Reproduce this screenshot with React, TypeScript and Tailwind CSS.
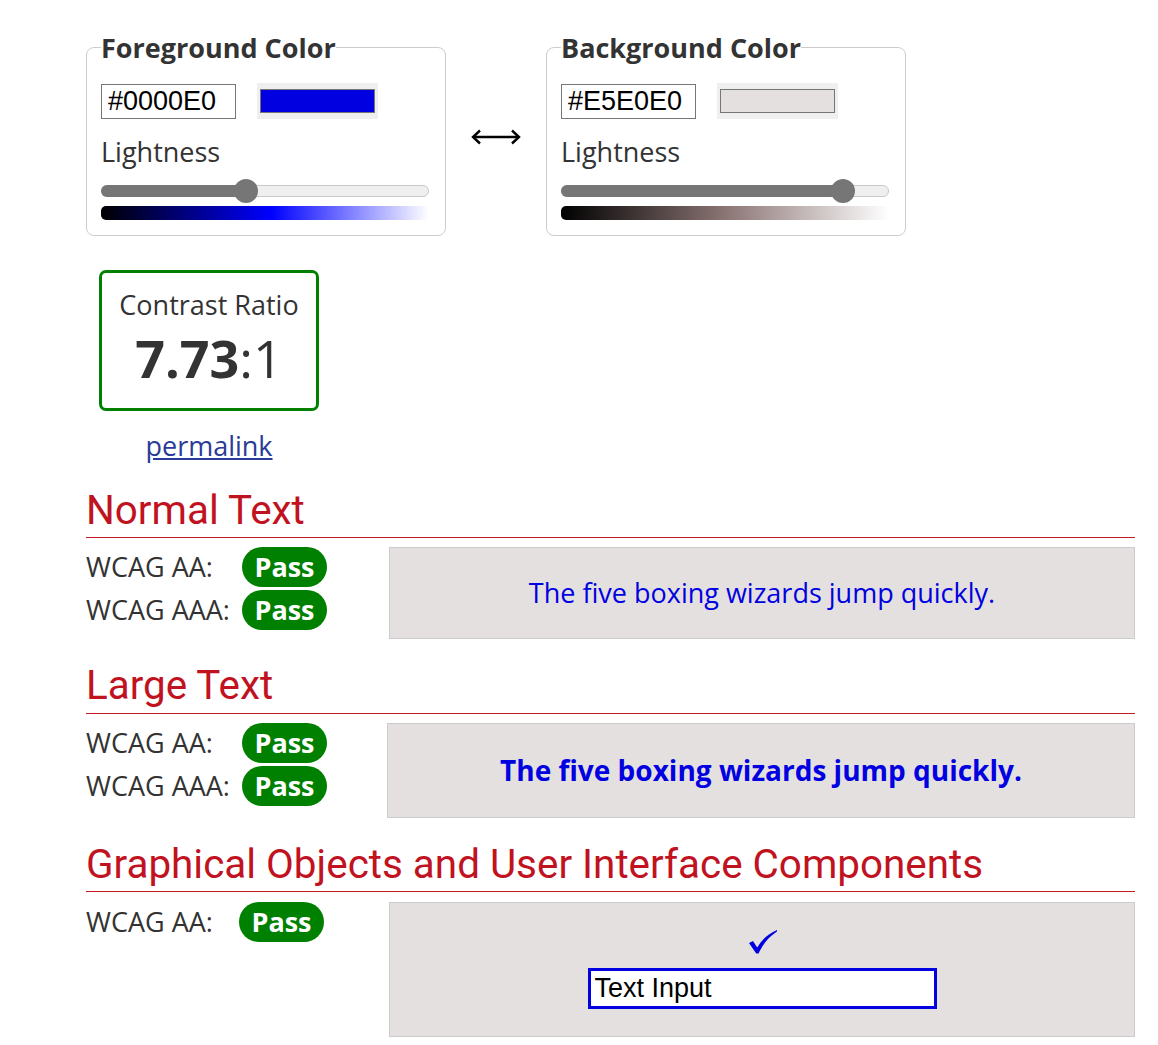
import React from 'react';

const FG = '#0000E0';
const BG = '#E5E0E0';

function Slider({ value }: { value: number }) {
  // thumb 24px, track 328px
  const pos = 12 + 304 * value;
  return (
    <div className="relative h-[24px] w-[328px]">
      <div className="absolute left-0 right-0 top-[6px] h-[12px] rounded-full border border-[#c8c8c8] bg-[#efefef]" />
      <div className="absolute left-0 top-[6px] h-[12px] rounded-l-full bg-[#767676]" style={{ width: pos }} />
      <div className="absolute top-0 h-[24px] w-[24px] rounded-full bg-[#767676]" style={{ left: pos - 12 }} />
    </div>
  );
}

function ColorPanel({ title, hex, value, gradient }: { title: string; hex: string; value: number; gradient: string }) {
  return (
    <fieldset className="w-[360px] rounded-lg border border-[#cccccc] pl-[14px] pr-[15px] pb-[15px]">
      <legend className="text-[27px] font-bold leading-none text-[#333]">{title}</legend>
      <div className="mt-[22px] flex items-center gap-[21px]">
        <div className="flex h-[35px] w-[135px] items-center border border-[#767676] px-[6px] font-['Liberation_Sans',Arial,sans-serif] text-[27px] text-black">
          {hex}
        </div>
        <div className="flex h-[36px] w-[121px] items-center justify-center bg-[#efefef]">
          <div className="h-[24px] w-[115px] border border-[#767676]" style={{ backgroundColor: hex }} />
        </div>
      </div>
      <div className="mt-[15px] text-[27px] leading-[36px] text-[#333]">Lightness</div>
      <div className="mt-[9px]">
        <Slider value={value} />
      </div>
      <div className="mt-[3px] h-[14px] w-[328px] rounded-[5px]" style={{ background: gradient }} />
    </fieldset>
  );
}

function Badge() {
  return (
    <span className="flex h-[40px] w-[85px] items-center justify-center rounded-full bg-[#008000] text-[27px] font-bold text-white">
      Pass
    </span>
  );
}

function Row({ label, w }: { label: string; w: string }) {
  return (
    <div className="flex h-[40px] items-center">
      <span className={`${w} text-[27px] text-[#333]`}>{label}</span>
      <Badge />
    </div>
  );
}

function Heading({ children }: { children: React.ReactNode }) {
  return (
    <h2 className="border-b border-[#c41a24] pb-[6px] font-['Roboto',sans-serif] text-[40.4px] leading-none text-[#c1121f]">
      {children}
    </h2>
  );
}

export default function App() {
  return (
    <div className="min-h-screen bg-white pl-[86px] pr-[23px] pt-[34px] font-['Open_Sans',sans-serif] text-[#333]">
      <div className="flex items-start">
        <ColorPanel
          title="Foreground Color"
          hex="#0000E0"
          value={0.439}
          gradient="linear-gradient(to right, #000, #0000ff 52%, #ffffff)"
        />
        <div className="flex w-[100px] justify-center pt-[95px]">
          <svg width="50" height="16" viewBox="0 0 50 16" fill="none" stroke="#000" strokeWidth="2.4">
            <path d="M2 8H48" />
            <path d="M9 1.5L2 8L9 14.5" />
            <path d="M41 1.5L48 8L41 14.5" />
          </svg>
        </div>
        <ColorPanel
          title="Background Color"
          hex="#E5E0E0"
          value={0.888}
          gradient="linear-gradient(to right, #000, #8b7474 50%, #ffffff)"
        />
      </div>

      <div className="mt-[34px] ml-[13px] flex w-[220px] flex-col items-center">
        <div className="flex h-[141px] w-[220px] flex-col items-center rounded-[7px] border-[3px] border-[#008000] pt-[15px]">
          <div className="text-[27px] leading-[34px]">Contrast Ratio</div>
          <div className="mt-[10px] text-[52px] leading-none">
            <span className="font-bold">7.73</span>:1
          </div>
        </div>
        <a href="#" className="mt-[18px] text-[27px] leading-[34px] text-[#2a3b98] underline">
          permalink
        </a>
      </div>

      <section className="mt-[28px]">
        <Heading>Normal Text</Heading>
        <div className="mt-[9px] flex">
          <div className="flex w-[303px] flex-col gap-[3px]">
            <Row label="WCAG AA:" w="w-[156px]" />
            <Row label="WCAG AAA:" w="w-[156px]" />
          </div>
          <div className="flex h-[92px] flex-1 items-center justify-center border border-[#cccccc] text-[27px]" style={{ color: FG, backgroundColor: BG }}>
            The five boxing wizards jump quickly.
          </div>
        </div>
      </section>

      <section className="mt-[27px]">
        <Heading>Large Text</Heading>
        <div className="mt-[9px] flex">
          <div className="flex w-[301px] flex-col gap-[3px]">
            <Row label="WCAG AA:" w="w-[156px]" />
            <Row label="WCAG AAA:" w="w-[156px]" />
          </div>
          <div className="flex h-[95px] flex-1 items-center justify-center border border-[#cccccc] text-[28px] font-bold" style={{ color: FG, backgroundColor: BG }}>
            The five boxing wizards jump quickly.
          </div>
        </div>
      </section>

      <section className="mt-[27px]">
        <Heading>Graphical Objects and User Interface Components</Heading>
        <div className="mt-[10px] flex">
          <div className="flex w-[303px] flex-col">
            <Row label="WCAG AA:" w="w-[153px]" />
          </div>
          <div className="flex h-[135px] flex-1 flex-col items-center border border-[#cccccc] pt-[27px]" style={{ backgroundColor: BG }}>
            <svg width="28" height="24" viewBox="0 0 28 24" className="ml-[2px]" fill={FG}>
              <path d="M0 13L4 11L8.2 17.5C13 9.5 19 4 28 0L28 1.6C20 7 14.5 13 9.6 23.5L7.2 23.5Z" />
            </svg>
            <div className="mt-[14px] flex h-[41px] w-[349px] items-center border-[3px] bg-white px-[4px] font-['Liberation_Sans',Arial,sans-serif] text-[27px] text-black" style={{ borderColor: FG }}>
              Text Input
            </div>
          </div>
        </div>
      </section>
    </div>
  );
}
